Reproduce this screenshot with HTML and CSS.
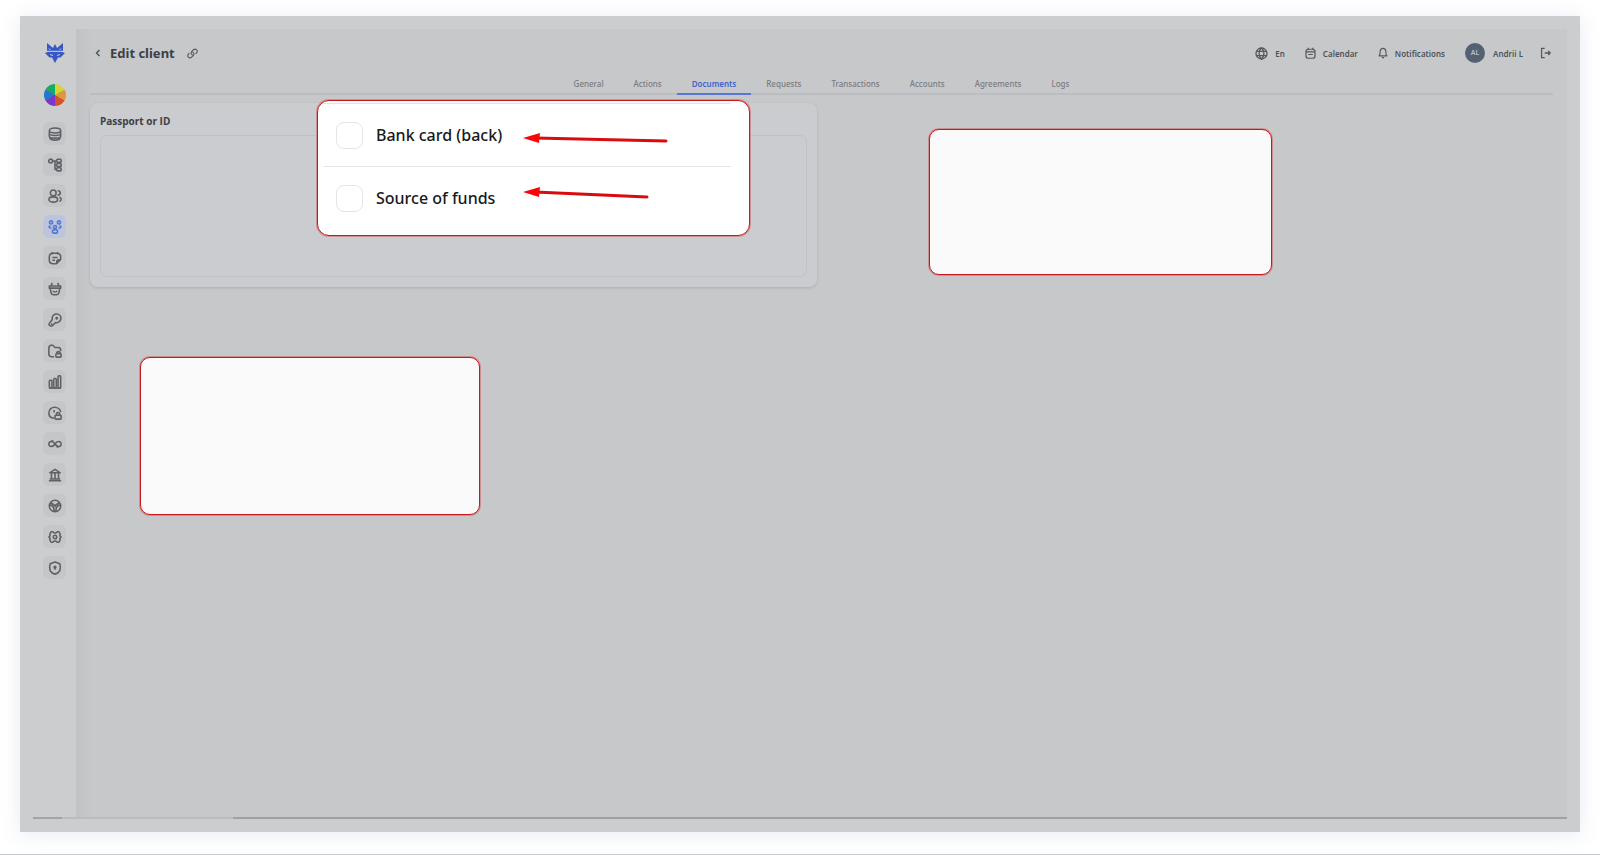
FILE: index.html
```html
<!DOCTYPE html>
<html lang="en">

<head>
    <meta charset="UTF-8">
    <meta name="viewport" content="width=device-width, initial-scale=1.0">
    <title>Edit client</title>
    <link rel="stylesheet" href="styles.css">
</head>

<body>
    <div class="frame">
        <div class="app">
            <nav class="sidebar" aria-label="Main menu">
                <a href="#" class="logo" aria-label="Home">
                    <svg viewBox="0 0 20 20" width="20" height="20">
                        <path fill="#3558c4" d="M2 0l6 5 2-4 2 4 6-5v8H2z" />
                        <path fill="#3558c4" d="M0 10l4-1.500h12l4 1.500-4.500 4.500H13L10 20l-3-5.500H4.500z" />
                        <path stroke="#cccdcf" stroke-width="1" fill="none" d="M5 11.500l3 1M15 11.500l-3 1M2 8.300h16M4 5.500l1.500 1.500M16 5.500L14.500 7" />
                    </svg>
                </a>
                <a href="#" class="wheel" aria-label="Theme"></a>
                <ul class="menu">
                    <li><a href="#" aria-label="Data"><svg viewBox="0 0 16 16"><ellipse cx="8" cy="4" rx="6.500" ry="2.800" /><path d="M1.500 5v2.500c0 3 13 3 13 0V5M1.500 8v2.500c0 3 13 3 13 0V8M2 12c1 4 11 4 12 0" /></svg></a></li>
                    <li><a href="#" aria-label="Structure"><svg viewBox="0 0 16 16"><circle cx="3" cy="3.500" r="2.200" /><path d="M5 3.500h5M8 3.500V13h2M8 8h2" /><rect x="10" y="1.500" width="5" height="3.500" rx="1" /><rect x="10" y="6.300" width="5" height="3.500" rx="1" /><rect x="10" y="11.200" width="5" height="3.500" rx="1" /></svg></a></li>
                    <li><a href="#" aria-label="Users"><svg viewBox="0 0 16 16"><circle cx="6" cy="4.500" r="3.300" /><ellipse cx="6" cy="12" rx="5" ry="3" /><path d="M11 2c4 0 4 5 0 5M13 9.500c3 1 2.500 4 0 4.500" /></svg></a></li>
                    <li><a href="#" class="active" aria-label="Clients"><svg viewBox="0 0 16 16"><circle cx="3.500" cy="2.800" r="1.800" /><circle cx="12.500" cy="2.800" r="1.800" /><circle cx="8" cy="8" r="1.800" /><ellipse cx="8" cy="13" rx="3" ry="2" /><path d="M3 6.500C.5 7 .5 9.500 4 9.500M13 6.500c2.500.5 2.500 3-1 3" /></svg></a></li>
                    <li><a href="#" aria-label="Notes"><svg viewBox="0 0 16 16"><path d="M9.500 14.500H6c-3 0-4.500-1-4.500-4V7c0-3 1-4.500 4.500-4.500h4c3 0 4.500 1 4.500 4.500v2.500zM5 1v3M11 1v3M5 7.500h6M5 10.500h3" /><path class="solid" d="M10 14v-2.500l1.500-1.500H14z" /></svg></a></li>
                    <li><a href="#" aria-label="Orders"><svg viewBox="0 0 16 16"><path d="M1.500 4.500h13v2.500h-13zM2.500 7l1 5.500c.3 1.500 1 2 2.500 2h4c1.500 0 2.200-.5 2.500-2l1-5.500M5 1L3.500 4M11 1l1.500 3M5.500 10c1 2 4 2 5 0" /></svg></a></li>
                    <li><a href="#" aria-label="Keys"><svg viewBox="0 0 16 16"><path d="M5 7.500C4 3 7.500 1 10 1.200c3 .3 5 2.500 4.800 5C14.500 10 11 11.500 8.500 11L5 14.500c-1 .8-4 .5-3.800-1.500 0-1 .3-1.500 1-2.200z" /><circle class="solid" cx="10" cy="6" r=".8" /><path d="M3.500 12l1.500 1.500" /></svg></a></li>
                    <li><a href="#" aria-label="Folders"><svg viewBox="0 0 16 16"><path d="M7 14.500H4c-2 0-3-1-3-3v-7c0-2 1-3 3-3h1.500L8 4h3.500c2 0 3 1 3 3v1" /><rect x="9" y="11" width="6" height="4" rx="1" /><path d="M10 11c0-3 4-3 4 0" /></svg></a></li>
                    <li><a href="#" aria-label="Statistics"><svg viewBox="0 0 16 16"><rect x="1.500" y="6" width="3" height="8.500" rx="1" /><rect x="6.500" y="4" width="3" height="10.500" rx="1" /><rect x="11.500" y="1" width="3" height="13.500" rx="1" /><path d="M1 15h14" /></svg></a></li>
                    <li><a href="#" aria-label="Access"><svg viewBox="0 0 16 16"><path d="M7 14c-4-.2-6-3-6-6 0-4 3-6.500 6.500-6.500S14 4 14.500 7M7 4.500v3" /><rect x="8" y="10.500" width="7" height="4.500" rx="1" /><path d="M9.500 10.500c0-4 4-4 4 0" /></svg></a></li>
                    <li><a href="#" aria-label="Links"><svg viewBox="0 0 16 16"><path d="M8 8C6 4.500 1 4 1 8s5 3.500 7 0 7-4 7 0-5 3.500-7 0M4 3.800L6 5M12 12l-2-1" /></svg></a></li>
                    <li><a href="#" aria-label="Bank"><svg viewBox="0 0 16 16"><path d="M2 5.500L8 1.500l6 4zM1 14.500h14M2 12.500h12M4 6v6M8 6v6M12 6v6" /></svg></a></li>
                    <li><a href="#" aria-label="Control"><svg viewBox="0 0 16 16"><circle cx="8" cy="8" r="6.500" /><path d="M3 4l5 3.500L13 4M8 7.500v2M2 7c3 0 5 2.500 5 7M14 7c-3 0-5 2.500-5 7" /></svg></a></li>
                    <li><a href="#" aria-label="Settings"><svg viewBox="0 0 16 16"><path d="M5.500 2L7 3.500h2L10.500 2h2L14 5l-.5 1.500L15 8l-1.500 1.500L14 11l-1.500 3h-2L9 12.500H7L5.500 14h-2L2 11l.5-1.500L1 8l1.500-1.500L2 5l1.500-3z" /><circle cx="8" cy="8" r="2" /></svg></a></li>
                    <li><a href="#" aria-label="Security"><svg viewBox="0 0 16 16"><path d="M8 1.200l5.500 2c.5 1.500 1 5 0 8C12 13.500 10 14.500 8 15c-2-.5-4-1.500-5.500-3.800-1-3-.5-6.500 0-8z" /><circle class="solid" cx="8" cy="7" r="1" /><path d="M8 7v3" /></svg></a></li>
                </ul>
            </nav>

            <main class="main">
                <header class="topbar">
                    <a href="#" class="back" aria-label="Back"><svg viewBox="0 0 6 8" width="6" height="8"><path d="M4.500 1L1.500 4l3 3" /></svg></a>
                    <h1>Edit client</h1>
                    <a href="#" class="copy" aria-label="Copy link"><svg viewBox="0 0 16 16" width="11" height="11"><path d="M9.500 10.500C6 10.500 5 7 7 5l2.500-2.500c3-2.500 7 1 4.500 4.500l-1.500 1.500M6.500 5.500C10 5.500 11 9 9 11l-2.500 2.500C3.500 16 -.5 12.500 2 9l1.500-1.500" /></svg></a>
                    <div class="tools">
                        <button type="button"><svg viewBox="0 0 16 16" width="13" height="13"><circle cx="8" cy="8" r="6.800" /><path d="M8 1C4 5 4 11 8 15c4-4 4-10 0-14M2 5.500h12M2 10.500h12" /></svg>En</button>
                        <button type="button"><svg viewBox="0 0 14 16" width="11" height="12"><rect x="1" y="3" width="12" height="12" rx="3" /><path d="M1 6.500h12M4 1v3M10 1v3M4 10h6" /></svg>Calendar</button>
                        <button type="button"><svg viewBox="0 0 14 16" width="10" height="12"><path d="M1.500 12c2-2 1-4 1.500-6.500C3.500 2.500 5 1.500 7 1.500s3.500 1 4 4c.5 2.500-.5 4.500 1.500 6.500zM5.500 14.500h3" /></svg>Notifications</button>
                        <button type="button" class="user"><span class="avatar">AL</span>Andrii L</button>
                        <button type="button" aria-label="Sign out"><svg viewBox="0 0 14 14" width="11" height="12"><path d="M6 1H2v12h4M6 7h7M10.500 4.500L13 7l-2.500 2.500" /></svg></button>
                    </div>
                </header>

                <nav class="tabs" aria-label="Client sections">
                    <a href="#">General</a>
                    <a href="#">Actions</a>
                    <a href="#" class="current">Documents</a>
                    <a href="#">Requests</a>
                    <a href="#">Transactions</a>
                    <a href="#">Accounts</a>
                    <a href="#">Agreements</a>
                    <a href="#">Logs</a>
                </nav>

                <div class="cards">
                    <section class="card">
                        <h2>Passport or ID</h2>
                        <div class="dropzone"></div>
                    </section>
                </div>
            </main>
            <div class="scrollbar"><span class="thumb"></span><span class="track"></span></div>
        </div>

        <form class="callout options">
            <div class="option">
                <input type="checkbox" id="bankBack">
                <label for="bankBack">Bank card (back)</label>
                <svg class="arrow" viewBox="0 0 146 12" width="146" height="12"><path stroke="#d90b10" stroke-width="3" stroke-linecap="round" d="M12 5L143 8" /><path fill="#f80509" d="M0 5L17 0l-1 10z" /></svg>
            </div>
            <div class="option">
                <input type="checkbox" id="funds">
                <label for="funds">Source of funds</label>
                <svg class="arrow high" viewBox="0 0 127 12" width="127" height="12"><path stroke="#d90b10" stroke-width="3" stroke-linecap="round" d="M12 5L124 10" /><path fill="#f80509" d="M0 5L17 0l-1 10z" /></svg>
            </div>
        </form>
        <div class="callout blank-right"></div>
        <div class="callout blank-left"></div>
    </div>
</body>

</html>
```

FILE: styles.css
```css
* {
    box-sizing: border-box;
}

body {
    margin: 0;
    font-family: "Noto Sans", "Open Sans", sans-serif;
    color: #3c3f45;
    background: #fff;
}

a {
    color: inherit;
    text-decoration: none;
}

svg {
    display: block;
    fill: none;
    stroke-linejoin: round;
}

.frame {
    position: relative;
    display: flex;
    min-height: 100vh;
    padding: 16px 20px 22px;
    border-bottom: 1px solid #c9cacc;
}

.app {
    flex: 1;
    display: grid;
    grid-template-columns: 43px 1fr;
    grid-template-rows: 1fr 2px;
    padding: 13px;
    background: #cccdcf;
    box-shadow: 0 2px 20px rgba(80, 100, 160, 0.13);
}

/* sidebar */
.sidebar {
    display: flex;
    flex-direction: column;
    align-items: center;
    padding-top: 14px;
}

.wheel {
    width: 22px;
    height: 22px;
    margin: 21px 0 16px;
    border-radius: 50%;
    background: conic-gradient(#d8d23c 0 60deg, #d89a3c 60deg 120deg, #d2532d 120deg 180deg, #7838c8 180deg 240deg, #2876c8 240deg 300deg, #18aa62 300deg);
}

.menu {
    display: flex;
    flex-direction: column;
    gap: 8px;
    margin: 0;
    padding: 0;
    list-style: none;
}

.menu a {
    display: flex;
    align-items: center;
    justify-content: center;
    width: 23px;
    height: 23px;
    border-radius: 6px;
    background: #c5c6c8;
}

.menu svg {
    width: 14px;
    height: 14px;
    stroke: #5f6166;
    stroke-width: 1.8;
}

.menu .solid {
    fill: #5f6166;
}

.menu .active {
    background: #bcc5dc;
}

.menu .active svg {
    stroke: #5677d5;
}

/* main area */
.main {
    padding: 10px 14px;
    background: linear-gradient(90deg, #c1c2c5, #c7c8ca 16px);
}

.topbar {
    display: flex;
    align-items: center;
    height: 28px;
    padding: 0 2px 0 5px;
}

.topbar svg {
    stroke: #55585e;
    stroke-width: 1.6;
}

h1 {
    margin: 0 12px 0 9px;
    font-size: 13px;
    line-height: 20px;
    font-weight: 700;
}

.tools {
    display: flex;
    align-items: center;
    gap: 20px;
    margin-left: auto;
}

.tools button {
    display: flex;
    align-items: center;
    gap: 7px;
    padding: 0;
    border: 0;
    background: none;
    color: #505359;
    font: 600 8px "Noto Sans", "Open Sans", sans-serif;
    cursor: pointer;
}

.tools .user {
    gap: 8px;
    margin-right: -3px;
}

.avatar {
    width: 20px;
    height: 20px;
    border-radius: 50%;
    background: #556072;
    color: #b9bec8;
    font-size: 7px;
    line-height: 20px;
    text-align: center;
}

.tabs {
    display: flex;
    justify-content: center;
    height: 28px;
    border-bottom: 2px solid #bcbdc2;
}

.tabs a {
    height: 28px;
    padding: 11px 15px 0;
    font-size: 8px;
    line-height: 12px;
    font-weight: 500;
    color: #7a7c81;
}

.tabs .current {
    color: #4063d0;
    font-weight: 600;
    border-bottom: 2px solid #5878d4;
}

.cards {
    display: grid;
    grid-template-columns: 1fr 1fr;
    gap: 10px;
    margin-top: 8px;
}

.card {
    padding: 10px;
    border-radius: 8px;
    background: #cbcccf;
    box-shadow: 0 1px 3px rgba(70, 75, 90, 0.2);
}

h2 {
    margin: 0 0 6px;
    font-family: "Open Sans", "Noto Sans", sans-serif;
    font-size: 10px;
    line-height: 16px;
    font-weight: 700;
}

.dropzone {
    height: 142px;
    border: 1px solid #c0c1c4;
    border-radius: 7px;
}

.scrollbar {
    grid-column: 1 / -1;
    display: flex;
    background: #bbbcbe;
}

.thumb {
    width: 29px;
    background: #a3a4a6;
}

.track {
    flex: 1;
    margin-left: 171px;
    background: #a0a1a3;
}

/* highlighted boxes over the page */
.callout {
    position: absolute;
    border: 1px solid #c9171b;
    border-radius: 10px;
    background: #fafafb;
    box-shadow: 0 0 0 1px rgba(214, 60, 60, 0.4);
}

.options {
    top: 100px;
    left: 317px;
    width: 433px;
    height: 136px;
    padding: 2px 18px 0 6px;
    border-radius: 12px;
    background: #fff;
}

.option {
    display: flex;
    align-items: center;
    height: 63px;
    padding-left: 12px;
    border-top: 1px solid #e4e5e9;
}

.option input {
    appearance: none;
    width: 27px;
    height: 27px;
    margin: 0 13px 0 0;
    border: 1px solid #e4e4ea;
    border-radius: 8px;
    background: #fff;
}

.option label {
    width: 147px;
    font-size: 16px;
    line-height: 24px;
    font-weight: 500;
    color: #17191c;
}

.arrow {
    margin-top: 8px;
}

.arrow.high {
    align-self: flex-start;
    margin-top: 20px;
}

.blank-right {
    top: 129px;
    left: 929px;
    width: 343px;
    height: 146px;
}

.blank-left {
    top: 357px;
    left: 140px;
    width: 340px;
    height: 158px;
}
```
